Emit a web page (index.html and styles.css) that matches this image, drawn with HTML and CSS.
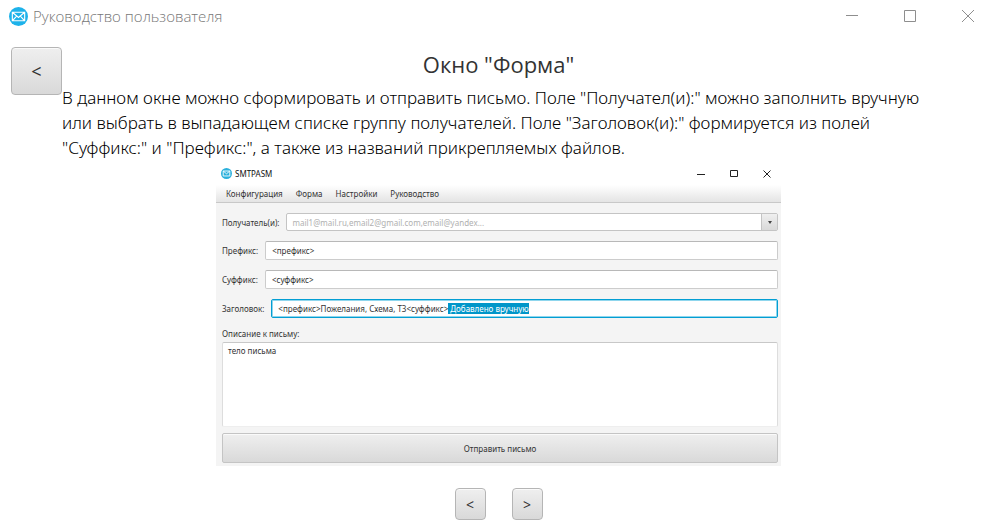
FILE: index.html
```html
<!DOCTYPE html>
<html lang="ru">
<head>
<meta charset="utf-8">
<title>Руководство пользователя</title>
<link rel="stylesheet" href="styles.css">
</head>
<body>
<header class="titlebar">
  <svg class="logo" viewBox="0 0 20 20" aria-hidden="true">
    <circle cx="10" cy="10" r="10" fill="#1db2ea"/>
    <path d="M3.500 5.500h13v9h-13zM3.500 5.500l6.500 5.500 6.500-5.500M3.500 14.500l4.500-5M16.500 14.500l-4.500-5" fill="none" stroke="#fff" stroke-width="1.200"/>
  </svg>
  <span class="titlebar-text">Руководство пользователя</span>
  <div class="controls">
    <button class="control" aria-label="Свернуть"><svg viewBox="0 0 12 12"><path d="M0 5.500h12"/></svg></button>
    <button class="control" aria-label="Развернуть"><svg viewBox="0 0 12 12"><path d="M.5.5h11v11H.5z"/></svg></button>
    <button class="control" aria-label="Закрыть"><svg viewBox="0 0 12 12"><path d="M0 0l12 12M12 0L0 12"/></svg></button>
  </div>
</header>

<main class="guide">
  <button class="button back" aria-label="Назад">&lt;</button>
  <article class="page">
    <h1 class="heading">Окно "Форма"</h1>
    <p class="text">В данном окне можно сформировать и отправить письмо. Поле "Получател(и):" можно заполнить вручную или выбрать в выпадающем списке группу получателей. Поле "Заголовок(и):" формируется из полей "Суффикс:" и "Префикс:", а также из названий прикрепляемых файлов.</p>

    <section class="app">
      <div class="app-title">
        <svg class="app-logo" viewBox="0 0 20 20" aria-hidden="true">
          <circle cx="10" cy="10" r="10" fill="#2bb0dc"/>
          <path d="M4 5.500h12v9H4zM4 5.500l6 5 6-5" fill="none" stroke="#fff" stroke-width="1.600"/>
        </svg>
        <span>SMTPASM</span>
        <div class="app-controls">
          <svg viewBox="0 0 8 8"><path d="M0 4.500h8"/></svg>
          <svg viewBox="0 0 8 8"><path d="M.5.5h7v6h-7z"/></svg>
          <svg viewBox="0 0 8 8"><path d="M.5.5l7 7M7.500.5l-7 7"/></svg>
        </div>
      </div>
      <nav class="menu">
        <a href="#">Конфигурация</a>
        <a href="#">Форма</a>
        <a href="#">Настройки</a>
        <a href="#">Руководство</a>
      </nav>
      <form class="form">
        <div class="row">
          <label for="to">Получатель(и):</label>
          <div class="combo">
            <select id="to"><option>mail1@mail.ru,email2@gmail.com,email@yandex...</option></select>
            <span class="combo-arrow"></span>
          </div>
        </div>
        <div class="row">
          <label for="prefix">Префикс:</label>
          <input class="field" id="prefix" type="text" value="&lt;префикс&gt;">
        </div>
        <div class="row">
          <label for="suffix">Суффикс:</label>
          <input class="field" id="suffix" type="text" value="&lt;суффикс&gt;">
        </div>
        <div class="row">
          <label for="subject">Заголовок:</label>
          <input class="field active" id="subject" type="text" value="&lt;префикс&gt;Пожелания, Схема, ТЗ&lt;суффикс&gt; Добавлено вручную">
        </div>
        <label class="body-label" for="body">Описание к письму:</label>
        <textarea class="field body-field" id="body">тело письма</textarea>
        <button class="button send" type="button">Отправить письмо</button>
      </form>
    </section>
  </article>
</main>

<footer class="pager">
  <button class="button step" aria-label="Предыдущая">&lt;</button>
  <button class="button step" aria-label="Следующая">&gt;</button>
</footer>
<script src="script.js"></script>
</body>
</html>
```
FILE: styles.css
```css
* {
  box-sizing: border-box;
}

body {
  margin: 0;
  background: #fff;
  color: #333;
  font-family: "Noto Sans", "Open Sans", sans-serif;
}

button,
input,
select,
textarea {
  font: inherit;
  color: inherit;
  margin: 0;
}

.titlebar {
  display: flex;
  align-items: center;
  gap: 5px;
  height: 32px;
  padding: 0 0 0 9px;
}

.logo {
  width: 19px;
  height: 19px;
}

.titlebar-text {
  color: #777;
  font-family: "Open Sans", "Noto Sans", sans-serif;
  font-size: 15px;
  font-weight: 300;
}

.controls {
  display: flex;
  margin-left: auto;
}

.control {
  display: grid;
  place-items: center;
  width: 58px;
  height: 32px;
  padding: 0;
  border: 0;
  background: none;
}

.control svg {
  width: 12px;
  height: 12px;
  fill: none;
  stroke: #8e8e8e;
}

.guide {
  display: grid;
  grid-template-columns: 51px minmax(0, 1fr) 51px;
  align-items: start;
  padding: 15px 11px 0;
}

.button {
  padding: 0;
  border: 1px solid #b5b5b5;
  border-radius: 4px;
  background: linear-gradient(#efefef, #d9d9d9);
  box-shadow: inset 0 1px #fafafa;
}

.back {
  height: 48px;
  font-size: 18px;
}

.heading {
  margin: 0;
  padding-bottom: 4px;
  font-family: "Open Sans", "Noto Sans", sans-serif;
  font-size: 22px;
  font-weight: 400;
  line-height: 34px;
  text-align: center;
}

.text {
  margin: 0;
  color: #000;
  font-size: 17px;
  font-weight: 300;
  line-height: 25px;
}

.app {
  width: 100%;
  max-width: 565px;
  margin: 2px auto 0;
  background: #f4f4f4;
  font-size: 8px;
}

.app-title {
  display: flex;
  align-items: center;
  gap: 3px;
  height: 23px;
  padding: 0 10px 0 5px;
  background: #fff;
  color: #111;
}

.app-logo {
  width: 11px;
  height: 11px;
}

.app-controls {
  display: flex;
  gap: 25px;
  margin-left: auto;
}

.app-controls svg {
  width: 8px;
  height: 8px;
  fill: none;
  stroke: #222;
}

.menu {
  display: flex;
  gap: 13px;
  height: 18px;
  padding: 0 10px;
  border-bottom: 1px solid #c8c8c8;
  background: linear-gradient(#fff, #e4e4e4);
  line-height: 18px;
}

.menu a {
  color: inherit;
  text-decoration: none;
}

.form {
  display: flex;
  flex-direction: column;
  padding: 10px 3px 3px 6px;
}

.row {
  display: flex;
  align-items: center;
  gap: 7px;
  margin-bottom: 10px;
}

.field {
  flex: 1;
  min-width: 0;
  height: 19px;
  padding: 0 6px;
  border: 1px solid #ccc;
  border-top-color: #b8b8b8;
  border-radius: 2px;
  outline: 0;
  background: #fff;
}

.active {
  border: 1px solid #039ed3;
  box-shadow: inset 0 0 0 1px #8fd6ed;
  caret-color: transparent;
}

.field::selection {
  background: #0096c9;
  color: #fff;
}

.combo {
  display: flex;
  flex: 1;
  height: 18px;
  border: 1px solid #c4c4c4;
  border-radius: 2px;
  background: #fff;
}

.combo select {
  flex: 1;
  min-width: 0;
  padding: 0 5px;
  border: 0;
  appearance: none;
  background: none;
  color: #b0b0b0;
}

.combo-arrow {
  display: grid;
  place-items: center;
  width: 16px;
  border-left: 1px solid #c4c4c4;
  background: linear-gradient(#efefef, #d9d9d9);
}

.combo-arrow::after {
  content: "";
  border: 2px solid transparent;
  border-top: 3px solid #444;
  border-bottom: 0;
}

.body-label {
  line-height: 12px;
  margin-bottom: 2px;
}

.body-field {
  flex: none;
  height: 85px;
  padding: 2px 5px;
  border-color: #c8c8c8 #ddd #eee;
  resize: none;
}

.send {
  height: 30px;
  margin-top: 6px;
  border-color: #c4c4c4;
  border-radius: 2px;
}

.pager {
  display: flex;
  justify-content: center;
  gap: 26px;
  padding-top: 22px;
}

.step {
  width: 31px;
  height: 32px;
  font-size: 14px;
}
```
FILE: script.js
```js
// Select the manually added part of the subject line.
const subject = document.getElementById("subject");
subject.focus({ preventScroll: true });
subject.setSelectionRange(subject.value.indexOf(" Добавлено"), subject.value.length);
```
